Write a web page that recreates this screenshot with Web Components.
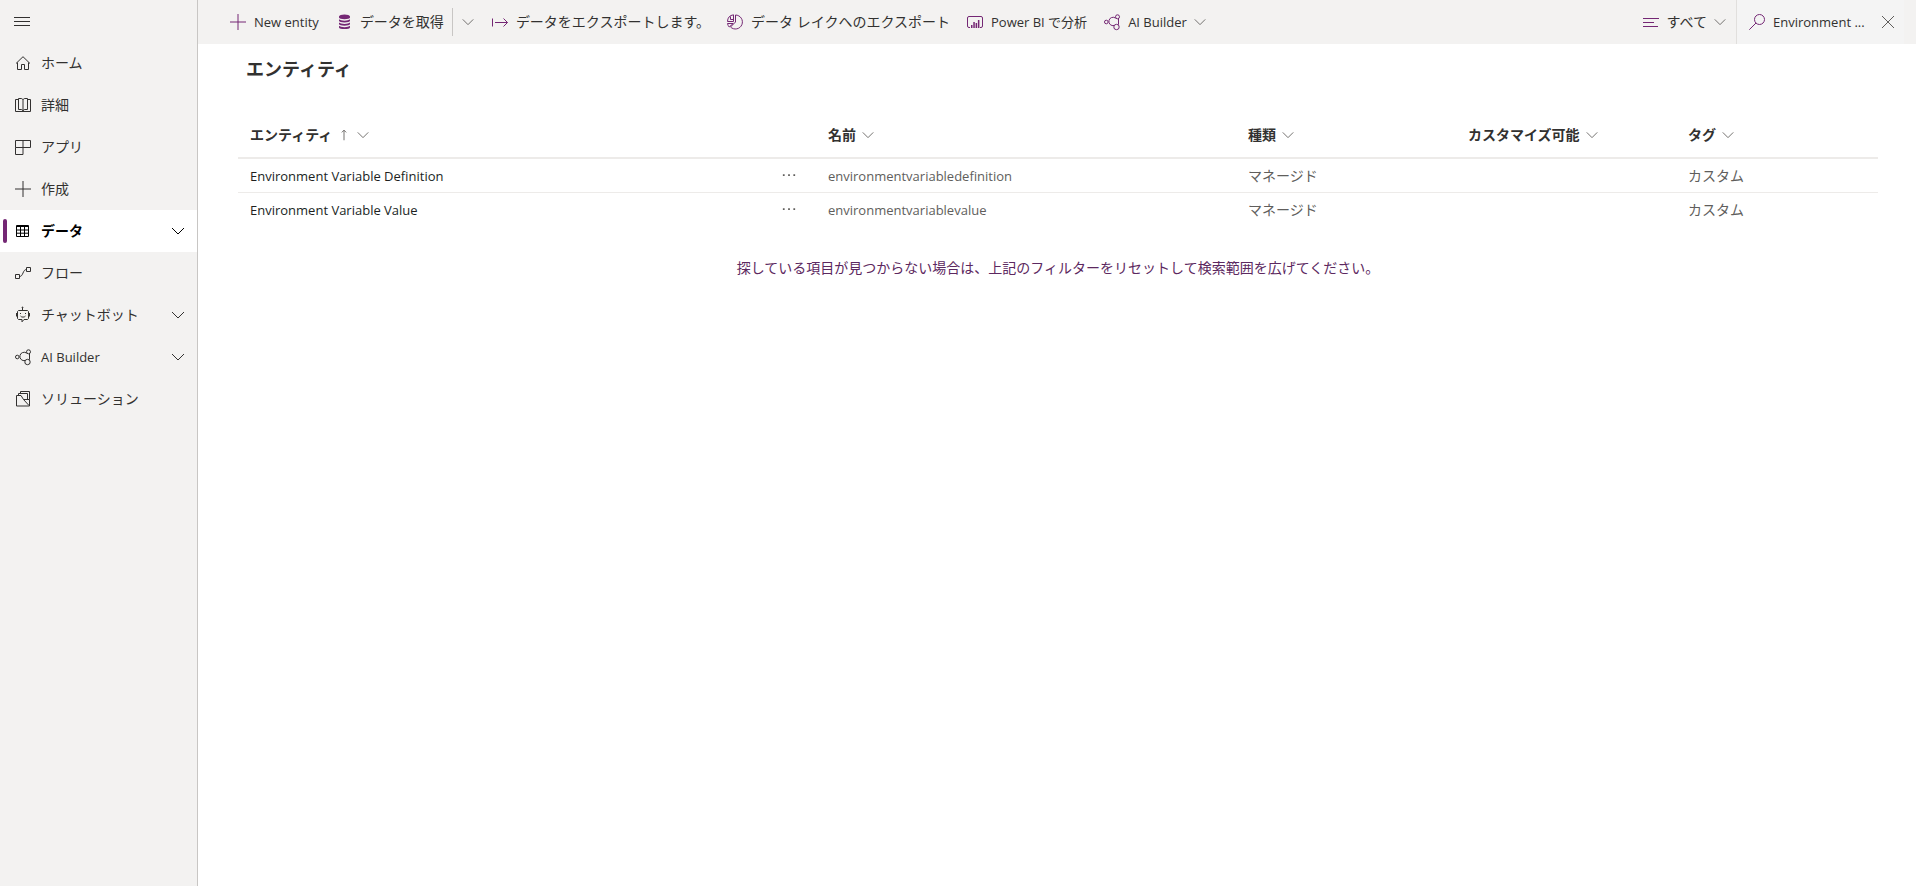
<!DOCTYPE html>
<html lang="ja">
<head>
  <meta charset="utf-8">
  <meta name="viewport" content="width=device-width, initial-scale=1">
  <title>エンティティ</title>
  <style>
    :root {
      --accent: #742774;
      --chrome: #f3f2f1;
      --text: #323130;
      --muted: #605e5c;
      --line: #edebe9;
    }

    body {
      margin: 0;
      background: white;
      color: var(--text);
      font-family: "Open Sans", "Noto Sans CJK JP", sans-serif;
      font-size: 14px;
      line-height: 20px;
    }
  </style>
</head>
<body>
  <app-shell>
    <side-nav slot="nav"></side-nav>
    <command-bar slot="commands"></command-bar>
    <entity-table></entity-table>
  </app-shell>

  <script>
    // 16x16 line icons
    const icons = {
      menu: '<path d="M0 4.500h16M0 8.500h16M0 12.500h16"/>',
      home: '<path d="M1 8.500 8 1.700l7 6.800M2.500 7.500v7h4v-5h3v5h4v-7"/>',
      book: '<path d="M3 2.500H.5v12h15v-12H13M3.500 12.500v-11H6c1 0 2 .5 2 1.500 0-1 1-1.500 2-1.500h2.500v11H10c-1 0-2 .5-2 1.500 0-1-1-1.500-2-1.500zM8 3v11"/>',
      apps: '<path d="M.5 1.500h15v7H.5zM8 1.500v14H.5v-7"/>',
      add: '<path d="M8 0v16M0 8h16"/>',
      table: '<path d="M1.500 2.500h12v11h-12zM1.500 3.500h12M1.500 7h12M1.500 10.200h12M5.500 3v10.500M9.500 3v10.500"/>',
      flow: '<path d="M.5 9.500h4v4h-4zM11.500 2.500h4v4h-4zM4.500 11.500C8.500 11.500 7.500 4.500 11.500 4.500"/>',
      bot: '<path d="M3.500 3.500h9l1 1v7l-1 1H9L7 14.800v-2.300H3.500l-1-1v-7zM7.500 3.500V.5M1.500 6v3.500M14.500 6v3.500M5.500 9c1 1.500 4 1.500 5 0"/><circle cx="7.500" cy=".5" r=".5"/><path fill="currentColor" stroke="none" d="M5 6h1v1H5zM10 6h1v1h-1z"/>',
      ai: '<circle cx="2.300" cy="8" r="1.800"/><circle cx="13.500" cy="2.800" r="2"/><circle cx="12.500" cy="13" r="2.700"/><path d="M11.700 4.200A4.200 4.200 0 1 0 10.200 11.500M14.500 4.700v6"/>',
      solution: '<path d="M1.500 4.500h4.500l2.500 4h6v6.500h-13zM3.500 4.500v-2h9v6M5.500 2.500v-2h9v8M8.500 8.500l5.500 6"/>',
      data: '<path fill="currentColor" stroke="none" d="M3 2.500C3-.2 14-.2 14 2.500v1C14 5.700 3 5.700 3 3.500zM3 5.200c1.500 1.900 9.500 1.900 11 0v1.600c0 2.200-11 2.200-11 0zM3 8.500c1.500 1.900 9.500 1.900 11 0v1.600c0 2.200-11 2.200-11 0zM3 11.800c1.500 1.900 9.500 1.900 11 0v1.600c0 2.200-11 2.200-11 0z"/>',
      export: '<path d="M.5 4.500v8M3 8.500h12.500M11.500 4.500l4 4-4 4"/>',
      lake: '<path d="M8.500 1a7 7 0 1 1-5 12l5-5zM6.500.8v6.700H.5A7 7 0 0 1 6.500.8zM.5 9.500h5.700l-4 3.500A7 7 0 0 1 .5 9.500zM3.500 2.500v3h3"/>',
      powerbi: '<path d="M3 13.500H2a1.500 1.500 0 0 1-1.500-1.500V4A1.500 1.500 0 0 1 2 2.500h12A1.500 1.500 0 0 1 15.500 4v8a1.500 1.500 0 0 1-1.500 1.500h-1"/><path fill="currentColor" stroke="none" d="M4 11h1.500v3H4zM6.300 8h1.500v6H6.300zM8.600 9h1.500v5H8.600zM10.900 6h1.500v8h-1.500z"/>',
      lines: '<path d="M0 4.500h16M0 8.500h11M0 12.500h15"/>',
      search: '<circle cx="10.500" cy="5.500" r="5"/><path d="M7 9 .3 15.700"/>',
      close: '<path d="m2 2 12 12M14 2 2 14"/>',
      chevron: '<path d="m2 5 6 6 6-6"/>',
      up: '<path d="M8 14V2.500M5.500 5 8 2.500 10.500 5"/>',
      more: '<path fill="currentColor" stroke="none" d="M1 6h2v2H1zM7 6h2v2H7zM13 6h2v2h-2z"/>'
    }

    class UiIcon extends HTMLElement {
      constructor () {
        super()
        this.shadow = this.attachShadow({ mode: 'open' })
      }

      connectedCallback () {
        this.shadow.innerHTML =
        /*html*/`
          <style>
            :host {
              display: block;
              flex: none;
              width: 16px;
              height: 16px;
            }

            svg {
              display: block;
              width: 100%;
              height: 100%;
              fill: none;
              stroke: currentColor;
              overflow: visible;
            }
          </style>
          <svg viewBox="0 0 16 16" aria-hidden="true">${icons[this.getAttribute('name')]}</svg>
        `
      }
    }

    class AppShell extends HTMLElement {
      constructor () {
        super()
        this.shadow = this.attachShadow({ mode: 'open' })
      }

      connectedCallback () {
        this.shadow.innerHTML =
        /*html*/`
          <style>
            :host {
              display: grid;
              grid-template-columns: 198px minmax(0, 1fr);
              min-height: 100vh;
            }

            .page {
              display: flex;
              flex-direction: column;
            }

            main {
              padding: 12px 38px 12px 40px;
            }

            h1 {
              margin: 0 8px 29px;
              font-size: 18px;
              line-height: 26px;
              font-weight: 600;
            }
          </style>
          <slot name="nav"></slot>
          <div class="page">
            <slot name="commands"></slot>
            <main>
              <h1>エンティティ</h1>
              <slot></slot>
            </main>
          </div>
        `
      }
    }

    class NavItem extends HTMLElement {
      constructor () {
        super()
        this.shadow = this.attachShadow({ mode: 'open' })
      }

      connectedCallback () {
        const chevron = this.hasAttribute('expandable') ? '<ui-icon class="chevron" name="chevron"></ui-icon>' : ''

        this.shadow.innerHTML =
        /*html*/`
          <style>
            :host {
              display: block;
            }

            a {
              display: flex;
              align-items: center;
              height: 42px;
              padding: 0 11px 0 3px;
              color: inherit;
              text-decoration: none;
            }

            .marker {
              width: 4px;
              height: 24px;
              margin-right: 8px;
              border-radius: 2px;
            }

            .label {
              flex: 1;
              margin-left: 10px;
            }

            :host([latin]) .label {
              font-size: 13px;
            }

            :host([selected]) a {
              background: white;
              color: black;
            }

            :host([selected]) .label {
              font-weight: 600;
            }

            :host([selected]) .marker {
              background: var(--accent);
            }

            a:hover {
              background: var(--line);
            }
          </style>
          <a href="#">
            <span class="marker"></span>
            <ui-icon name="${this.getAttribute('icon')}"></ui-icon>
            <span class="label"><slot></slot></span>
            ${chevron}
          </a>
        `
      }
    }

    class SideNav extends HTMLElement {
      constructor () {
        super()
        this.shadow = this.attachShadow({ mode: 'open' })
      }

      connectedCallback () {
        this.shadow.innerHTML =
        /*html*/`
          <style>
            :host {
              display: block;
              background: var(--chrome);
              border-right: 1px solid #c8c6c4;
            }

            .toggle {
              display: flex;
              align-items: center;
              height: 42px;
              padding: 0 14px;
              border: none;
              background: none;
              color: inherit;
              cursor: pointer;
            }
          </style>
          <nav>
            <button class="toggle" aria-label="メニュー"><ui-icon name="menu"></ui-icon></button>
            <nav-item icon="home">ホーム</nav-item>
            <nav-item icon="book">詳細</nav-item>
            <nav-item icon="apps">アプリ</nav-item>
            <nav-item icon="add">作成</nav-item>
            <nav-item icon="table" selected expandable>データ</nav-item>
            <nav-item icon="flow">フロー</nav-item>
            <nav-item icon="bot" expandable>チャットボット</nav-item>
            <nav-item icon="ai" latin expandable>AI Builder</nav-item>
            <nav-item icon="solution">ソリューション</nav-item>
          </nav>
        `
      }
    }

    class CommandButton extends HTMLElement {
      constructor () {
        super()
        this.shadow = this.attachShadow({ mode: 'open' })
      }

      connectedCallback () {
        const chevron = this.hasAttribute('menu') ? '<ui-icon class="chevron" name="chevron"></ui-icon>' : ''

        this.shadow.innerHTML =
        /*html*/`
          <style>
            :host {
              display: block;
              flex: none;
            }

            button {
              display: flex;
              align-items: center;
              gap: 8px;
              height: 44px;
              padding: 0 8px;
              border: none;
              background: none;
              color: inherit;
              font: inherit;
              white-space: nowrap;
              cursor: pointer;
            }

            :host([latin]) button {
              font-size: 13px;
            }

            ui-icon {
              color: var(--accent);
            }

            .chevron {
              width: 14px;
              height: 14px;
              margin-left: -2px;
              color: var(--muted);
            }

            button:hover {
              background: var(--line);
            }
          </style>
          <button>
            <ui-icon name="${this.getAttribute('icon')}"></ui-icon>
            <slot></slot>
            ${chevron}
          </button>
        `
      }
    }

    class CommandBar extends HTMLElement {
      constructor () {
        super()
        this.shadow = this.attachShadow({ mode: 'open' })
      }

      connectedCallback () {
        this.shadow.innerHTML =
        /*html*/`
          <style>
            :host {
              display: flex;
              align-items: center;
              gap: 1px;
              height: 44px;
              padding: 0 12px 0 24px;
              background: var(--chrome);
            }

            .split {
              display: flex;
              align-items: center;
            }

            .split button {
              display: flex;
              align-items: center;
              height: 28px;
              padding: 0 8px;
              border: none;
              border-left: 1px solid #c8c6c4;
              background: none;
              color: var(--muted);
            }

            .split ui-icon {
              width: 14px;
              height: 14px;
            }

            .filter {
              margin-left: auto;
            }

            .search {
              display: flex;
              align-items: center;
              gap: 8px;
              box-sizing: border-box;
              width: 168px;
              height: 44px;
              padding: 0 8px 0 12px;
              border-left: 1px solid #e1dfdd;
              background: #f4f4f4;
            }

            .search ui-icon {
              color: var(--accent);
            }

            input {
              flex: 1;
              min-width: 0;
              padding: 0;
              border: none;
              outline: none;
              background: none;
              color: inherit;
              font: inherit;
              font-size: 13px;
            }

            .search button {
              padding: 0;
              border: none;
              background: none;
            }

            .search button ui-icon {
              color: var(--muted);
            }
          </style>
          <command-button icon="add" latin>New entity</command-button>
          <div class="split">
            <command-button icon="data">データを取得</command-button>
            <button aria-label="その他"><ui-icon name="chevron"></ui-icon></button>
          </div>
          <command-button icon="export">データをエクスポートします。</command-button>
          <command-button icon="lake">データ レイクへのエクスポート</command-button>
          <command-button icon="powerbi" latin>Power BI で分析</command-button>
          <command-button icon="ai" latin menu>AI Builder</command-button>
          <command-button class="filter" icon="lines" menu>すべて</command-button>
          <div class="search">
            <ui-icon name="search"></ui-icon>
            <input type="text" aria-label="検索" value="Environment ...">
            <button aria-label="クリア"><ui-icon name="close"></ui-icon></button>
          </div>
        `
      }
    }

    class EntityTable extends HTMLElement {
      constructor () {
        super()
        this.shadow = this.attachShadow({ mode: 'open' })
        this.data = []
      }

      connectedCallback () {
        this.loadData()
        this.render()
      }

      loadData () {
        this.data = [
          {
            "title": "Environment Variable Definition",
            "name": "environmentvariabledefinition",
            "type": "マネージド",
            "customizable": "",
            "tag": "カスタム"
          },
          {
            "title": "Environment Variable Value",
            "name": "environmentvariablevalue",
            "type": "マネージド",
            "customizable": "",
            "tag": "カスタム"
          }
        ]
      }

      render () {
        const headers = ['エンティティ', '名前', '種類', 'カスタマイズ可能', 'タグ'].map((label, index) => `
          <th scope="col">
            <button>
              ${label}
              ${index === 0 ? '<ui-icon class="sort" name="up"></ui-icon>' : ''}
              <ui-icon name="chevron"></ui-icon>
            </button>
          </th>
        `).join('')

        const rows = this.data.map(item => `
          <tr>
            <td class="latin">
              <div class="title">
                ${item.title}
                <button aria-label="その他のコマンド"><ui-icon name="more"></ui-icon></button>
              </div>
            </td>
            <td class="latin">${item.name}</td>
            <td>${item.type}</td>
            <td>${item.customizable}</td>
            <td>${item.tag}</td>
          </tr>
        `).join('')

        this.shadow.innerHTML =
        /*html*/`
          <style>
            :host {
              display: block;
            }

            table {
              width: 100%;
              table-layout: fixed;
              border-collapse: separate;
              border-spacing: 0;
            }

            .name { width: 420px; }
            .type, .custom { width: 220px; }
            .tag { width: 202px; }

            th {
              height: 44px;
              padding: 2px 12px 0;
              border-bottom: 2px solid var(--line);
              text-align: left;
            }

            button {
              display: flex;
              align-items: center;
              padding: 0;
              border: none;
              background: none;
              color: inherit;
              font: inherit;
              cursor: pointer;
            }

            th button {
              gap: 5px;
              font-weight: 600;
              white-space: nowrap;
            }

            th ui-icon {
              width: 14px;
              height: 14px;
              color: var(--muted);
            }

            td {
              height: 33px;
              padding: 0 12px;
              color: var(--muted);
            }

            tr:not(:last-child) td {
              border-bottom: 1px solid var(--line);
            }

            .latin {
              font-size: 13px;
            }

            .title {
              display: flex;
              align-items: center;
              justify-content: space-between;
              padding-right: 8px;
              color: #201f1e;
            }

            .title ui-icon {
              width: 14px;
              height: 14px;
              color: var(--muted);
            }

            p {
              margin: 32px 0 0;
              text-align: center;
            }

            a {
              color: #5c2860;
              text-decoration: none;
            }
          </style>
          <table>
            <colgroup>
              <col>
              <col class="name">
              <col class="type">
              <col class="custom">
              <col class="tag">
            </colgroup>
            <thead><tr>${headers}</tr></thead>
            <tbody>${rows}</tbody>
          </table>
          <p><a href="#">探している項目が見つからない場合は、上記のフィルターをリセットして検索範囲を広げてください。</a></p>
        `
      }
    }

    customElements.define('ui-icon', UiIcon)
    customElements.define('app-shell', AppShell)
    customElements.define('nav-item', NavItem)
    customElements.define('side-nav', SideNav)
    customElements.define('command-button', CommandButton)
    customElements.define('command-bar', CommandBar)
    customElements.define('entity-table', EntityTable)
  </script>
</body>
</html>
